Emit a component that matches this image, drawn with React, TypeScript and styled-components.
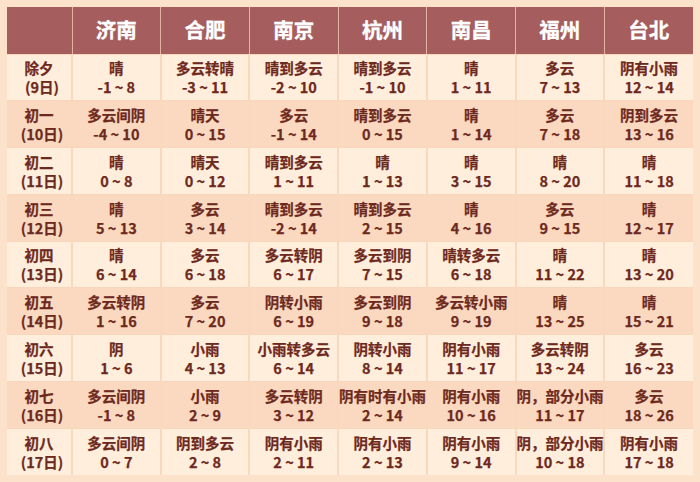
import React from 'react'
import styled, { createGlobalStyle } from 'styled-components'

const GlobalStyle = createGlobalStyle`
  html, body {
    margin: 0;
    padding: 0;
    background: #fde2cb;
  }
  * { box-sizing: border-box; }
`

const Frame = styled.div`
  width: 700px;
  height: 482px;
  padding: 7px;
  background: #fde2cb;
  font-family: "Noto Sans CJK SC", "Noto Sans", sans-serif;
`

const Table = styled.table`
  width: 686px;
  height: 468px;
  border-collapse: collapse;
  table-layout: fixed;
`

const HeadCell = styled.th<{ $first?: boolean }>`
  width: ${p => (p.$first ? '65px' : 'auto')};
  height: 47px;
  background: #a55e5d;
  color: #ffffff;
  font-size: 20.5px;
  font-weight: 700;
  text-align: center;
  border-left: 1px solid #e4b3a2;
  padding: 0 0 2px;
  -webkit-text-stroke: 0.3px #ffffff;
  &:first-child { border-left: none; }
`

const Row = styled.tr<{ $alt: boolean }>`
  background: ${p => (p.$alt ? '#fad9c0' : '#feeedb')};
  border-top: 1px solid #f8d6bb;
`

const Cell = styled.td`
  height: 46px;
  padding: 0;
  text-align: center;
  vertical-align: middle;
  color: #6e291e;
  font-size: 14.5px;
  font-weight: 700;
  line-height: 19px;
  -webkit-text-stroke: 0.25px #6e291e;
  border-left: 2px solid #f9d8bd;
  &:first-child { border-left: none; }
`

const Line = styled.div`
  white-space: nowrap;
`

const DayLine = styled.div`
  white-space: nowrap;
  padding-left: 6px;
`

const cities = ['济南', '合肥', '南京', '杭州', '南昌', '福州', '台北']

type Day = { name: string; date: string; cells: [string, string][] }

const days: Day[] = [
  { name: '除夕', date: '(9日)', cells: [['晴', '-1 ~ 8'], ['多云转晴', '-3 ~ 11'], ['晴到多云', '-2 ~ 10'], ['晴到多云', '-1 ~ 10'], ['晴', '1 ~ 11'], ['多云', '7 ~ 13'], ['阴有小雨', '12 ~ 14']] },
  { name: '初一', date: '(10日)', cells: [['多云间阴', '-4 ~ 10'], ['晴天', '0 ~ 15'], ['多云', '-1 ~ 14'], ['晴到多云', '0 ~ 15'], ['晴', '1 ~ 14'], ['多云', '7 ~ 18'], ['阴到多云', '13 ~ 16']] },
  { name: '初二', date: '(11日)', cells: [['晴', '0 ~ 8'], ['晴天', '0 ~ 12'], ['晴到多云', '1 ~ 11'], ['晴', '1 ~ 13'], ['晴', '3 ~ 15'], ['晴', '8 ~ 20'], ['晴', '11 ~ 18']] },
  { name: '初三', date: '(12日)', cells: [['晴', '5 ~ 13'], ['多云', '3 ~ 14'], ['晴到多云', '-2 ~ 14'], ['晴到多云', '2 ~ 15'], ['晴', '4 ~ 16'], ['多云', '9 ~ 15'], ['晴', '12 ~ 17']] },
  { name: '初四', date: '(13日)', cells: [['晴', '6 ~ 14'], ['多云', '6 ~ 18'], ['多云转阴', '6 ~ 17'], ['多云到阴', '7 ~ 15'], ['晴转多云', '6 ~ 18'], ['晴', '11 ~ 22'], ['晴', '13 ~ 20']] },
  { name: '初五', date: '(14日)', cells: [['多云转阴', '1 ~ 16'], ['多云', '7 ~ 20'], ['阴转小雨', '6 ~ 19'], ['多云到阴', '9 ~ 18'], ['多云转小雨', '9 ~ 19'], ['晴', '13 ~ 25'], ['晴', '15 ~ 21']] },
  { name: '初六', date: '(15日)', cells: [['阴', '1 ~ 6'], ['小雨', '4 ~ 13'], ['小雨转多云', '6 ~ 14'], ['阴转小雨', '8 ~ 14'], ['阴有小雨', '11 ~ 17'], ['多云转阴', '13 ~ 24'], ['多云', '16 ~ 23']] },
  { name: '初七', date: '(16日)', cells: [['多云间阴', '-1 ~ 8'], ['小雨', '2 ~ 9'], ['多云转阴', '3 ~ 12'], ['阴有时有小雨', '2 ~ 14'], ['阴有小雨', '10 ~ 16'], ['阴，部分小雨', '11 ~ 17'], ['多云', '18 ~ 26']] },
  { name: '初八', date: '(17日)', cells: [['多云间阴', '0 ~ 7'], ['阴到多云', '2 ~ 8'], ['阴有小雨', '2 ~ 11'], ['阴有小雨', '2 ~ 13'], ['阴有小雨', '9 ~ 14'], ['阴，部分小雨', '10 ~ 18'], ['阴有小雨', '17 ~ 18']] },
]

export default function App() {
  return (
    <Frame>
      <GlobalStyle />
      <Table>
        <thead>
          <tr>
            <HeadCell $first />
            {cities.map(c => (
              <HeadCell key={c}>{c}</HeadCell>
            ))}
          </tr>
        </thead>
        <tbody>
          {days.map((d, i) => (
            <Row key={d.name} $alt={i % 2 === 1}>
              <Cell>
                <Line>{d.name}</Line>
                <DayLine>{d.date}</DayLine>
              </Cell>
              {d.cells.map(([w, t], j) => (
                <Cell key={j}>
                  <Line>{w}</Line>
                  <Line>{t}</Line>
                </Cell>
              ))}
            </Row>
          ))}
        </tbody>
      </Table>
    </Frame>
  )
}
